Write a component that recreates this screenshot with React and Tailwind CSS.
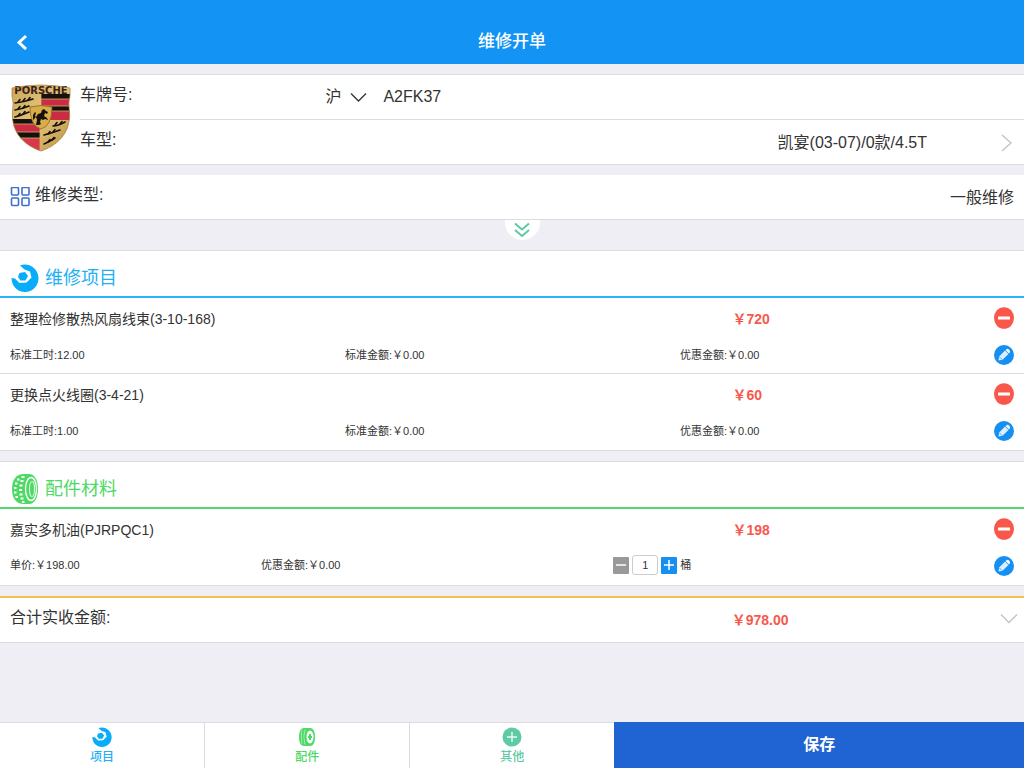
import React, { useState } from "react";

// Full-width yuan sign
const YUAN = "\uFFE5";

function PorscheCrest() {
  return (
    <svg viewBox="0 0 60 68" className="mb-1 h-[68px] w-[60px] shrink-0" role="img" aria-label="Porsche">
      <defs>
        <linearGradient id="gold" x1="0" y1="0" x2="1" y2="1">
          <stop offset="0" stopColor="#c9a558" />
          <stop offset="0.5" stopColor="#e3c67c" />
          <stop offset="1" stopColor="#b88d3c" />
        </linearGradient>
        <clipPath id="shield">
          <path d="M1 4Q15 1 30 1Q45 1 59 4L59 12Q57 18 58.500 28C60 50 45 62 30 67C15 62 0 50 1.500 28Q3 18 1 12Z" />
        </clipPath>
      </defs>
      <g clipPath="url(#shield)">
        <rect width="60" height="68" fill="url(#gold)" />
        <g>
          <rect x="30" y="10" width="30" height="5" fill="#17100e" />
          <rect x="30" y="15" width="30" height="7" fill="#c92c43" />
          <rect x="30" y="22" width="30" height="5" fill="#17100e" />
          <rect x="30" y="27" width="30" height="9" fill="#c92c43" />
          <rect x="0" y="35" width="29" height="5" fill="#17100e" />
          <rect x="0" y="40" width="29" height="8" fill="#c92c43" />
          <rect x="0" y="48" width="29" height="6" fill="#17100e" />
          <rect x="0" y="54" width="29" height="14" fill="#d7384a" />
          <path d="M30 15H60M30 22H60M30 27H60M0 40H29M0 48H29M0 54H29M29 35V68M30 10V26" stroke="#d8b56a" strokeWidth="0.8" />
        </g>
        <g fill="none" stroke="#17100e" strokeWidth="1.600" strokeLinecap="round">
          <path d="M4 19Q13 18 22 15M4 26Q11 25 18 22M4 33Q11 31 18 28" />
          <path d="M7 18l2-2.500M12 17l2-2.500M17 16l2-2.500M7 25l2-2.500M12 24l2-2.500M7 32l2-2.500M12 30l2-2.500" />
          <path d="M42 42Q47 42 54 38M33 51Q41 49 49 46M33 60Q38 58 44 54" />
          <path d="M44 41l2-2.500M49 40l2-2.500M37 50l2-2.500M42 48l2-2.500M37 58l2-2.500M41 56l2-2.500" />
        </g>
      </g>
      <path d="M19 23Q30 20 41 23Q41 42 30 45Q19 42 19 23Z" fill="#d9ac48" stroke="#8c6424" strokeWidth="0.8" />
      <path d="M25 41l1-5-1-3 2-3 3-1 1-3 2-1 2 2 2 1-1 2-2-1-1 3 3 2 1 2-3-1-2 1-2-1-1 3 1 2-2 1z M25 33l-3 3v-5l2-3 1 1-1 3z" fill="#17100e" />
      <text x="30" y="10" textAnchor="middle" fontSize="10" fontWeight="bold" fill="#3a2118" fontFamily="DejaVu Sans, sans-serif">PORSCHE</text>
      <path d="M1 4Q15 1 30 1Q45 1 59 4L59 12Q57 18 58.500 28C60 50 45 62 30 67C15 62 0 50 1.500 28Q3 18 1 12Z" fill="none" stroke="#a88546" strokeWidth="0.8" />
    </svg>
  );
}

function WrenchIcon({ className }) {
  return (
    <svg viewBox="0 0 28 28" className={className} aria-hidden="true">
      <path
        d="M9 1.500C18-2 27.500 5 27.500 14C27.500 22 21.500 28 14 28C6.500 28 .5 22 .5 14L4 14.500L8.500 19L15.500 18.500L20.500 13.500L19 7.500L13.500 5.500Z"
        fill="#09acf9"
      />
      <path d="M8.500 9L14 8L17 12L14.500 16.500L9.500 16.500L7 13Z" fill="#09acf9" />
    </svg>
  );
}

function TireIcon({ className }) {
  return (
    <svg viewBox="0 0 28 32" className={className} aria-hidden="true">
      <path d="M13 1H18C24 1 27 8 27 16S24 31 18 31H13C5 31 1 25 1 16S5 1 13 1Z" fill="#4cd964" />
      <ellipse cx="20" cy="16" rx="5.500" ry="11.500" fill="none" stroke="#fff" strokeWidth="1.300" />
      <ellipse cx="21" cy="16" rx="2.500" ry="7.500" fill="none" stroke="#d9f9df" strokeWidth="1.200" />
      <g stroke="#fff" strokeWidth="2.200">
        <path d="M10.500 4h3M6 6.500h2.500M9.500 8h3M4 10.500h2.500M8.500 12.500h3M3 15h2.500M8 17h3M3 19.500h2.500M8.500 21.500h3M4.500 24h2.500M9.500 25.500h3M11 29h2.500" />
      </g>
    </svg>
  );
}

function WheelIcon({ className }) {
  return (
    <svg viewBox="0 0 18 20" className={className} aria-hidden="true">
      <path d="M6 1H12C15.500 1 17 5 17 10S15.500 19 12 19H6C2.500 19 1 15 1 10S2.500 1 6 1Z" fill="#4cd964" />
      <ellipse cx="12" cy="10" rx="3.500" ry="6.500" fill="#fff" />
      <path d="M12 7V13M10 10H14" stroke="#4cd964" strokeWidth="2" />
      <path d="M4 3Q2.500 10 4 17M7 2.500Q4.500 10 7 17.500" fill="none" stroke="#b5f0bf" strokeWidth="0.8" />
    </svg>
  );
}

function Chevron({ d, className, viewBox }) {
  return (
    <svg viewBox={viewBox} className={className} fill="none" stroke="currentColor" aria-hidden="true">
      <path d={d} />
    </svg>
  );
}

function RowActions() {
  return (
    <div className="flex flex-col items-center gap-4 pt-[9px]">
      <button type="button" aria-label="删除" className="block">
        <svg viewBox="0 0 20 22" className="h-[22px] w-5">
          <ellipse cx="10" cy="11" rx="10" ry="10.800" fill="#f9574a" />
          <rect x="4" y="9.500" width="12" height="3" rx="0.5" fill="#fff" />
        </svg>
      </button>
      <button type="button" aria-label="编辑" className="block">
        <svg viewBox="0 0 20 20" className="size-5">
          <circle cx="10" cy="10" r="10" fill="#168ff3" />
          <path d="M4.500 15.500L5.200 11.500L11 5.500L14.500 9L8.500 14.800Z" fill="#d9efff" />
          <path d="M11.500 5L13 4Q14 3.500 15.200 4.800T16 7L15 8.500Z" fill="#fff" />
          <path d="M5.500 12L8 14.500" stroke="#168ff3" strokeWidth="0.700" />
        </svg>
      </button>
    </div>
  );
}

function LineItem({ name, price, children }) {
  return (
    <li className="flex h-[76px] border-b border-[#dcdce0] px-[10px] last:border-b-0">
      <div className="min-w-0 flex-1">
        <div className="grid h-[42px] grid-cols-[72%_28%] items-center text-sm leading-5">
          <span>{name}</span>
          <span className="pl-[14px] font-bold text-[#f8584c]">{YUAN}{price}</span>
        </div>
        {children}
      </div>
      <RowActions />
    </li>
  );
}

function SectionTitle({ icon, className, children }) {
  return (
    <h2 className={`flex h-[47px] items-center gap-[6px] border-b-2 pl-[11px] pt-2 text-lg font-normal leading-6 ${className}`}>
      {icon}
      {children}
    </h2>
  );
}

function Tab({ icon, label, className }) {
  return (
    <button type="button" className={`flex flex-1 flex-col items-center border-r border-[#dcdce0] pt-1 text-xs font-medium leading-4 last:border-r-0 ${className}`}>
      {icon}
      <span className="pt-[2px]">{label}</span>
    </button>
  );
}

const REPAIRS = [
  { name: "整理检修散热风扇线束(3-10-168)", price: "720", hours: "12.00" },
  { name: "更换点火线圈(3-4-21)", price: "60", hours: "1.00" },
];

export default function App() {
  const [plate, setPlate] = useState("A2FK37");
  const [quantity, setQuantity] = useState(1);

  return (
    <div className="flex min-h-screen flex-col bg-[#efeef4] font-['Liberation_Sans','Noto_Sans_CJK_SC',sans-serif] text-[#333]">
      <header className="grid h-16 grid-cols-[1fr_auto_1fr] items-center bg-[#1394f5] pt-5 text-white">
        <button type="button" aria-label="返回" className="ml-4 w-3">
          <Chevron viewBox="0 0 12 16" d="M10 2L3 8.500L10 15" className="h-4 w-3 stroke-3" />
        </button>
        <h1 className="text-[17px] font-medium leading-6">维修开单</h1>
      </header>

      <main className="flex-1 text-base leading-6">
        <section className="mt-[10px] flex items-center border-y border-[#dcdce0] bg-white pl-[11px]">
          <PorscheCrest />
          <div className="ml-[9px] flex-1">
            <div className="flex h-[45px] items-center border-b border-[#dcdce0]">
              <label htmlFor="plate" className="w-[26%] pb-1">车牌号:</label>
              <div className="grid w-[42px] items-center">
                <select aria-label="省份" className="col-start-1 row-start-1 appearance-none bg-transparent outline-none">
                  <option>沪</option>
                </select>
                <Chevron viewBox="0 0 17 11" d="M1 1.500L8.500 9L16 1.500" className="pointer-events-none col-start-1 row-start-1 h-[11px] w-[17px] justify-self-end stroke-[1.3]" />
              </div>
              <input id="plate" value={plate} onChange={(e) => setPlate(e.target.value)} className="ml-4 min-w-0 flex-1 outline-none" />
            </div>
            <div className="flex h-11 items-center justify-between">
              <span className="pb-1">车型:</span>
              <button type="button" className="flex items-center gap-[74px] pr-3 pt-[2px]">
                凯宴(03-07)/0款/4.5T
                <Chevron viewBox="0 0 11 18" d="M1 1L10 9L1 17" className="h-[18px] w-[11px] text-[#c4c4c8] stroke-[1.5]" />
              </button>
            </div>
          </div>
        </section>

        <section className="mt-[10px] flex h-[45px] items-center justify-between border-b border-[#dcdce0] bg-white px-[10px]">
          <span className="flex items-center gap-[5px]">
            <svg viewBox="0 0 20 20" className="size-5" fill="none" stroke="#3d70c9" strokeWidth="1.600" aria-hidden="true">
              <rect x="1.500" y="0.500" width="7" height="7.500" rx="1" />
              <rect x="12" y="0.500" width="7" height="7.500" rx="1" />
              <rect x="1.500" y="11" width="7" height="7.500" rx="1" />
              <rect x="12" y="11" width="7" height="7.500" rx="1" />
            </svg>
            <span className="pb-1">维修类型:</span>
          </span>
          <button type="button" className="pt-[2px]">一般维修</button>
        </section>

        <div className="flex h-[30px] justify-center pl-5">
          <button type="button" aria-label="展开" className="flex h-5 w-[35px] items-center justify-center rounded-b-[18px] bg-white text-[#5fc8a4]">
            <Chevron viewBox="0 0 16 16" d="M1 1.500L8 7.500L15 1.500M1 8L8 14L15 8" className="size-4 stroke-2" />
          </button>
        </div>

        <section className="border-y border-[#dcdce0] bg-white">
          <SectionTitle icon={<WrenchIcon className="size-7" />} className="border-[#29b6f1] text-[#1cb0f6]">
            维修项目
          </SectionTitle>
          <ul>
            {REPAIRS.map((item) => (
              <LineItem key={item.name} name={item.name} price={item.price}>
                <div className="grid grid-cols-3 pt-[7px] text-[11px] leading-4">
                  <span>标准工时:{item.hours}</span>
                  <span className="pl-[7px]">标准金额:{YUAN}0.00</span>
                  <span className="pl-[14px]">优惠金额:{YUAN}0.00</span>
                </div>
              </LineItem>
            ))}
          </ul>
        </section>

        <section className="mt-[10px] border-y border-[#dcdce0] bg-white">
          <SectionTitle icon={<TireIcon className="h-8 w-7" />} className="border-[#53d66b] text-[#4cd964]">
            配件材料
          </SectionTitle>
          <ul>
            <LineItem name="嘉实多机油(PJRPQC1)" price="198">
              <div className="grid grid-cols-[25%_36%_39%] items-center pt-1 text-[11px] leading-4">
                <span>单价:{YUAN}198.00</span>
                <span className="pl-[5px]">优惠金额:{YUAN}0.00</span>
                <div className="flex items-center gap-[3px] pl-[3px]">
                  <button type="button" aria-label="减少" onClick={() => setQuantity(Math.max(0, quantity - 1))} className="flex h-[17px] w-4 items-center justify-center rounded-[1px] bg-[#999] text-white">
                    <Chevron viewBox="0 0 10 10" d="M0 5H10" className="size-[10px] stroke-[1.5]" />
                  </button>
                  <input
                    aria-label="数量"
                    value={quantity}
                    onChange={(e) => setQuantity(Number(e.target.value) || 0)}
                    className="h-5 w-[26px] rounded-[3px] border border-[#ccc] text-center outline-none"
                  />
                  <button type="button" aria-label="增加" onClick={() => setQuantity(quantity + 1)} className="flex h-[17px] w-4 items-center justify-center rounded-[1px] bg-[#168ff3] text-white">
                    <Chevron viewBox="0 0 10 10" d="M0 5H10M5 0V10" className="size-[10px] stroke-[1.5]" />
                  </button>
                  <span>桶</span>
                </div>
              </div>
            </LineItem>
          </ul>
        </section>

        <section className="mt-[10px] flex h-[47px] items-center border-b border-t-2 border-b-[#dcdce0] border-t-[#ecc44c] bg-white pl-[10px] pr-[6px]">
          <span className="w-[71%] pb-1">合计实收金额:</span>
          <span className="flex-1 pl-[6px] text-sm font-bold text-[#f8584c]">{YUAN}978.00</span>
          <button type="button" aria-label="展开明细" className="pb-1 text-[#c4c4c8]">
            <Chevron viewBox="0 0 18 11" d="M1 1.500L9 9.500L17 1.500" className="h-[11px] w-[18px] stroke-[1.5]" />
          </button>
        </section>
      </main>

      <footer className="flex h-[46px]">
        <nav className="flex flex-3 border-t border-[#dcdce0] bg-white">
          <Tab icon={<WrenchIcon className="size-5" />} label="项目" className="text-[#1cb0f6]" />
          <Tab icon={<WheelIcon className="h-5 w-[18px]" />} label="配件" className="text-[#4cd964]" />
          <Tab
            icon={
              <svg viewBox="0 0 20 20" className="size-5" aria-hidden="true">
                <circle cx="10" cy="10" r="9.500" fill="#5fcaa3" />
                <path d="M10 5V15M5 10H15" stroke="#e5fff5" strokeWidth="1.400" />
              </svg>
            }
            label="其他"
            className="text-[#5fcaa3]"
          />
        </nav>
        <button type="button" className="flex-2 bg-[#2063d2] text-base font-bold text-white">保存</button>
      </footer>
    </div>
  );
}
